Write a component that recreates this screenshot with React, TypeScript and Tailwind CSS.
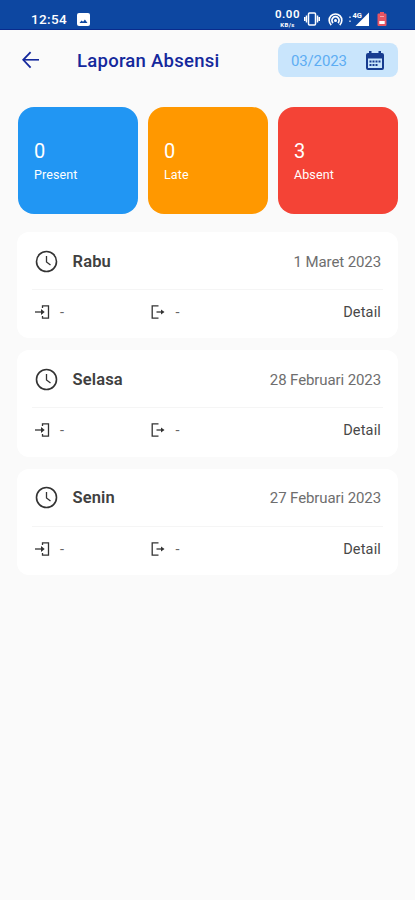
export default function App() {
  return (
    <div className="min-h-screen bg-[#fafafa] font-['Roboto','Liberation_Sans',sans-serif]">
      <StatusBar />

      {/* Header */}
      <header className="flex h-[60px] items-center pl-[22px] pr-[17px]">
        <svg className="h-[18px] w-[18px] text-[#14289c]" viewBox="0 0 18 18" fill="none" stroke="currentColor">
          <path strokeWidth={1.8} d="M8.6 1.2L1.2 8.8l7.4 7.8" />
          <path strokeWidth={1.6} d="M1.5 8.8h15.5" />
        </svg>
        <h1 className="ml-[37px] pt-[3px] text-[18.5px] font-medium tracking-[0.26px] text-[#14289c]">
          Laporan Absensi
        </h1>
        <button className="ml-auto flex h-[34px] w-[120px] items-center justify-between rounded-[8px] bg-[#c9e5fc] pl-[13px] pr-[14px] text-[15px] tracking-[-0.15px] text-[#5dadf3]">
          <span className="pt-[2px]">03/2023</span>
          <CalendarIcon />
        </button>
      </header>

      {/* Summary */}
      <div className="mt-[17px] flex gap-[9.5px] pl-[17.5px] pr-[17px] text-white">
        {summary.map((item) => (
          <div key={item.label} className={`h-[107px] flex-1 rounded-[16px] pl-[16.5px] pt-[31px] ${item.color}`}>
            <div className="text-[20px] leading-[26px]">{item.total}</div>
            <div className="mt-[2px] text-[12.5px] leading-[18px] tracking-[0.1px]">{item.label}</div>
          </div>
        ))}
      </div>

      {/* Attendance list */}
      <div className="mt-[18px] flex flex-col gap-[12px] px-[17px]">
        {days.map((item) => (
          <div key={item.day} className="h-[106.3px] rounded-[12px] bg-white px-[15px]">
            <div className="flex h-[58px] items-center border-b border-[#f5f5f5] pl-[3px] pr-[2px] pt-px">
              <ClockIcon />
              <span className="ml-[14.5px] pt-[2px] text-[16.5px] font-semibold tracking-[0.15px] text-[#404040]">{item.day}</span>
              <span className="ml-auto pt-[2px] text-[15px] tracking-[-0.1px] text-[#6e6e6e]">{item.date}</span>
            </div>
            <div className="flex h-[44px] items-center pl-[3px] pr-[2px] text-[14.5px] text-[#666]">
              <div className="flex w-[115.5px] items-center gap-[10px]">
                <EnterIcon />
                <span className="pt-[2px]">-</span>
              </div>
              <div className="flex items-center gap-[10px]">
                <LeaveIcon />
                <span className="pt-[2px]">-</span>
              </div>
              <span className="ml-auto pt-[2px] text-[14.5px] tracking-[0.15px] text-[#484848]">Detail</span>
            </div>
          </div>
        ))}
      </div>
    </div>
  );
}

const summary = [
  { total: 0, label: "Present", color: "bg-[#2196f3]" },
  { total: 0, label: "Late", color: "bg-[#ff9800]" },
  { total: 3, label: "Absent", color: "bg-[#f44336]" },
];

const days = [
  { day: "Rabu", date: "1 Maret 2023" },
  { day: "Selasa", date: "28 Februari 2023" },
  { day: "Senin", date: "27 Februari 2023" },
];

function StatusBar() {
  return (
    <div className="flex h-[30px] items-end border-b border-[#0a2b8c] bg-[#0d47a1] pb-[3px] pl-[31px] pr-[28px] text-white">
      <span className="text-[13.5px] font-medium leading-[13px] tracking-[0.35px]">12:54</span>
      <svg className="ml-[10px] h-[13px] w-[13px]" viewBox="0 0 13 13">
        <rect width="13" height="13" rx="2" fill="currentColor" />
        <path d="M2.5 10l2-2.6 1.6 1.4 1.8-2.3 2.6 3.5z" fill="#0d47a1" />
      </svg>

      <div className="ml-auto flex items-end">
        <div className="-mb-[2px] flex w-[25px] flex-col items-center">
          <span className="text-[11.5px] font-semibold leading-[13px] tracking-[0.5px]">0.00</span>
          <span className="text-[6px] font-bold leading-[7px] tracking-[0.4px]">KB/s</span>
        </div>
        {/* Vibrate */}
        <svg className="ml-[4px] h-[14px] w-[16px]" viewBox="0 0 16 14" fill="none" stroke="currentColor" strokeWidth={1.5}>
          <rect x="4.5" y="1" width="7" height="12" rx="1" />
          <path d="M2.5 3.5v7M13.5 3.5v7M.7 5v4M15.3 5v4" />
        </svg>
        {/* Hotspot */}
        <svg className="ml-[8px] h-[13px] w-[15px]" viewBox="0 0 15 13" fill="none" stroke="currentColor" strokeWidth={1.7}>
          <path d="M3.3 12A6.3 6.3 0 1 1 11.7 12" />
          <path d="M5.1 10A3.6 3.6 0 1 1 9.9 10" />
          <circle cx="7.5" cy="7.5" r="1.5" fill="currentColor" stroke="none" />
        </svg>
        {/* Signal */}
        <div className="relative ml-[6px] h-[14px] w-[20px]">
          <svg className="h-full w-full" viewBox="0 0 20 14" fill="currentColor">
            <path d="M20 .5V14H6.5z" />
            <path d="M0 4.5h2V6H0zM0 8.5h2V10H0z" opacity=".6" />
          </svg>
          <span className="absolute left-[3.5px] top-0 text-[7.5px] font-bold leading-[8px]">4G</span>
        </div>
        {/* Battery */}
        <svg className="ml-[8px] h-[14px] w-[10px]" viewBox="0 0 10 14">
          <path d="M3 0h4v1.5h1.5a1 1 0 0 1 1 1V13a1 1 0 0 1-1 1h-7a1 1 0 0 1-1-1V2.5a1 1 0 0 1 1-1H3z" fill="#e75563" />
          <path d="M2.3 9h5.4v3H2.3z" fill="white" />
          <path d="M3 4.5h4" stroke="#f6a5b0" />
        </svg>
      </div>
    </div>
  );
}

function CalendarIcon() {
  return (
    <svg className="h-[19px] w-[18px] text-[#173c90]" viewBox="0 0 18 19">
      <path fill="currentColor" d="M3 0h2.5v2h7V0H15v2h1a2 2 0 0 1 2 2v13a2 2 0 0 1-2 2H2a2 2 0 0 1-2-2V4a2 2 0 0 1 2-2h1z" />
      <path fill="#c9e5fc" d="M2 7.5h14V17H2z" />
      <path fill="currentColor" d="M3.5 9.5h2v2h-2zM6.5 9.5h2v2h-2zM9.5 9.5h2v2h-2zM12.5 9.5h2v2h-2zM3.5 13h2v2h-2zM6.5 13h2v2h-2zM9.5 13h2v2h-2z" />
    </svg>
  );
}

function ClockIcon() {
  return (
    <svg className="h-[23px] w-[23px] text-[#333]" viewBox="0 0 23 23" fill="none" stroke="currentColor">
      <circle cx="11.5" cy="11.5" r="10" strokeWidth={1.6} />
      <path strokeWidth={1.3} d="M11.5 6v6l4 3" />
    </svg>
  );
}

function EnterIcon() {
  return (
    <svg className="h-[14px] w-[15px] text-[#333]" viewBox="0 0 15 14" fill="none" stroke="currentColor" strokeWidth={1.3}>
      <path d="M7.5 3V.8h6v12.4h-6V11" />
      <path d="M0 7h7.5" />
      <path fill="currentColor" stroke="none" d="M6 4L9.7 7 6 10z" />
    </svg>
  );
}

function LeaveIcon() {
  return (
    <svg className="h-[14px] w-[15px] text-[#333]" viewBox="0 0 15 14" fill="none" stroke="currentColor" strokeWidth={1.3}>
      <path d="M7.5.8H1.200v12.4h6.3" />
      <path d="M5.5 7H12" />
      <path fill="currentColor" stroke="none" d="M10 4.5L13.5 7 10 9.5z" />
    </svg>
  );
}
